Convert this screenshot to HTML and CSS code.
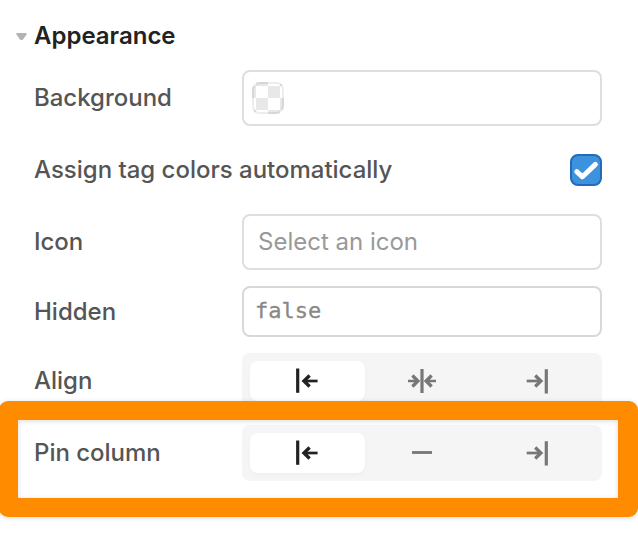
FILE: index.html
```html
<!DOCTYPE html>
<html lang="en">
<head>
<meta charset="utf-8">
<title>Appearance</title>
<link rel="stylesheet" href="styles.css">
</head>
<body>
<svg class="symbols" aria-hidden="true">
  <symbol id="left" viewBox="0 0 32 32">
    <path class="bar" d="M6.700 3.500v24.300"/>
    <path class="stroke" d="M26.600 16H13"/><path class="head" d="M18.600 10.500L12.900 16l5.700 5.500"/>
  </symbol>
  <symbol id="center" viewBox="0 0 32 32">
    <path class="bar" d="M16 4v24"/>
    <path class="stroke" d="M2 16h9M30 16H21"/><path class="head" d="M6.400 10.500L11.900 16l-5.500 5.500M25.600 10.500L20.100 16l5.500 5.500"/>
  </symbol>
  <symbol id="right" viewBox="0 0 32 32">
    <path class="bar" d="M25.300 4.200v24.300"/>
    <path class="stroke" d="M5.700 16H19"/><path class="head" d="M14.200 10.500L19.900 16l-5.700 5.500"/>
  </symbol>
  <symbol id="none" viewBox="0 0 32 32">
    <path class="dash" d="M6 15.500h20"/>
  </symbol>
</svg>
<main class="panel">
  <h2 class="heading">
    <svg class="caret" viewBox="0 0 11 8"><path d="M1 0h9q1.300 .6.4 1.800L7 6.600q-1.500 1.400-3 0L.6 1.800Q-.3.600 1 0z"/></svg>
    <span>Appearance</span>
  </h2>
  <div class="row">
    <span class="label">Background</span>
    <div class="field"><span class="swatch"></span></div>
  </div>
  <div class="row row-check">
    <span class="label">Assign tag colors automatically</span>
    <span class="checkbox"><svg viewBox="0 0 32 32"><path d="M6.800 17.600l5.700 5.200L25.400 10.400"/></svg></span>
  </div>
  <div class="row">
    <span class="label">Icon</span>
    <div class="field"><span class="placeholder">Select an icon</span></div>
  </div>
  <div class="row row-code">
    <span class="label">Hidden</span>
    <div class="field"><span class="code">false</span></div>
  </div>
  <div class="row">
    <span class="label">Align</span>
    <div class="segments">
      <span class="segment selected"><svg><use href="#left"/></svg></span>
      <span class="segment"><svg><use href="#center"/></svg></span>
      <span class="segment"><svg><use href="#right"/></svg></span>
    </div>
  </div>
  <div class="row">
    <span class="label">Pin column</span>
    <div class="segments">
      <span class="segment selected"><svg><use href="#left"/></svg></span>
      <span class="segment"><svg><use href="#none"/></svg></span>
      <span class="segment"><svg><use href="#right"/></svg></span>
    </div>
  </div>
  <div class="highlight"></div>
</main>
</body>
</html>
```
FILE: styles.css
```css
* { box-sizing: border-box; }
body {
  margin: 0;
  background: #fff;
  font-family: Inter, "Liberation Sans", sans-serif;
  font-size: 24px;
  line-height: 32px;
  color: #555;
}
.symbols { position: absolute; width: 0; height: 0; }
.panel {
  position: relative;
  width: 638px;
  height: 542px;
  padding: 20px 36px 0 34px;
  display: flex;
  flex-direction: column;
  gap: 16px;
  overflow: hidden;
}
.heading {
  display: flex;
  align-items: center;
  gap: 7px;
  height: 34px;
  margin: 0 0 0 -18px;
  padding-bottom: 3px;
  font-size: 24px;
  font-weight: 600;
  color: #222;
}
.caret { width: 11px; height: 8px; fill: #b3b3b3; margin-top: 2px; }
.row {
  display: grid;
  grid-template-columns: 208px 360px;
  align-items: center;
  height: 56px;
  flex: none;
}
.row-check { grid-template-columns: 1fr 32px; }
.row-code { height: 51px; }
.label { font-weight: 500; white-space: nowrap; letter-spacing: -0.01px; }
.field {
  display: flex;
  align-items: center;
  height: 100%;
  padding: 0 14px;
  border: 2px solid #dedede;
  border-radius: 8px;
}
.row-code .field { padding: 0 11px 2px; border-color: #d8d8d8; }
.swatch {
  width: 32px;
  height: 32px;
  margin-left: -6px;
  border: 2px solid rgba(0, 0, 0, .07);
  border-radius: 8px;
  background: conic-gradient(#e8e8e8 25%, #fff 0 50%, #e8e8e8 0 75%, #fff 0) 4px 4px / 24px 24px border-box;
}
.checkbox {
  width: 32px;
  height: 32px;
  border: 2px solid #236bb9;
  border-radius: 8px;
  background: #3c92dc;
}
.checkbox svg {
  display: block;
  width: 32px;
  height: 32px;
  margin: -2px;
  fill: none;
  stroke: #fff;
  stroke-width: 5;
  stroke-linecap: round;
  stroke-linejoin: round;
}
.placeholder { color: #999; }
.code {
  font-family: "DejaVu Sans Mono", monospace;
  font-size: 22px;
  color: #888;
  -webkit-text-stroke: .3px #888;
}
.segments {
  display: grid;
  grid-template-columns: repeat(3, 1fr);
  height: 56px;
  padding: 8px;
  border-radius: 8px;
  background: #f5f5f5;
}
.segment {
  display: flex;
  align-items: center;
  justify-content: center;
  border-radius: 8px;
  color: #777;
}
.segment svg { width: 32px; height: 32px; }
.selected {
  background: #fff;
  color: #222;
  box-shadow: 0 2px 4px rgba(0, 0, 0, .03);
}
.bar, .stroke, .head, .dash { fill: none; stroke: currentColor; }
.bar { stroke-width: 3.2; }
.stroke { stroke-width: 2.7; }
.head { stroke-width: 3.3; }
.dash { stroke-width: 2.8; }
.highlight {
  position: absolute;
  left: -1px;
  top: 401px;
  width: 639px;
  height: 116px;
  border: 19px solid #ff8c00;
  border-right-width: 20px;
  border-radius: 9px;
  box-shadow: 0 1px 5px rgba(0, 0, 0, .15), inset 0 1px 5px rgba(0, 0, 0, .15);
}
```
